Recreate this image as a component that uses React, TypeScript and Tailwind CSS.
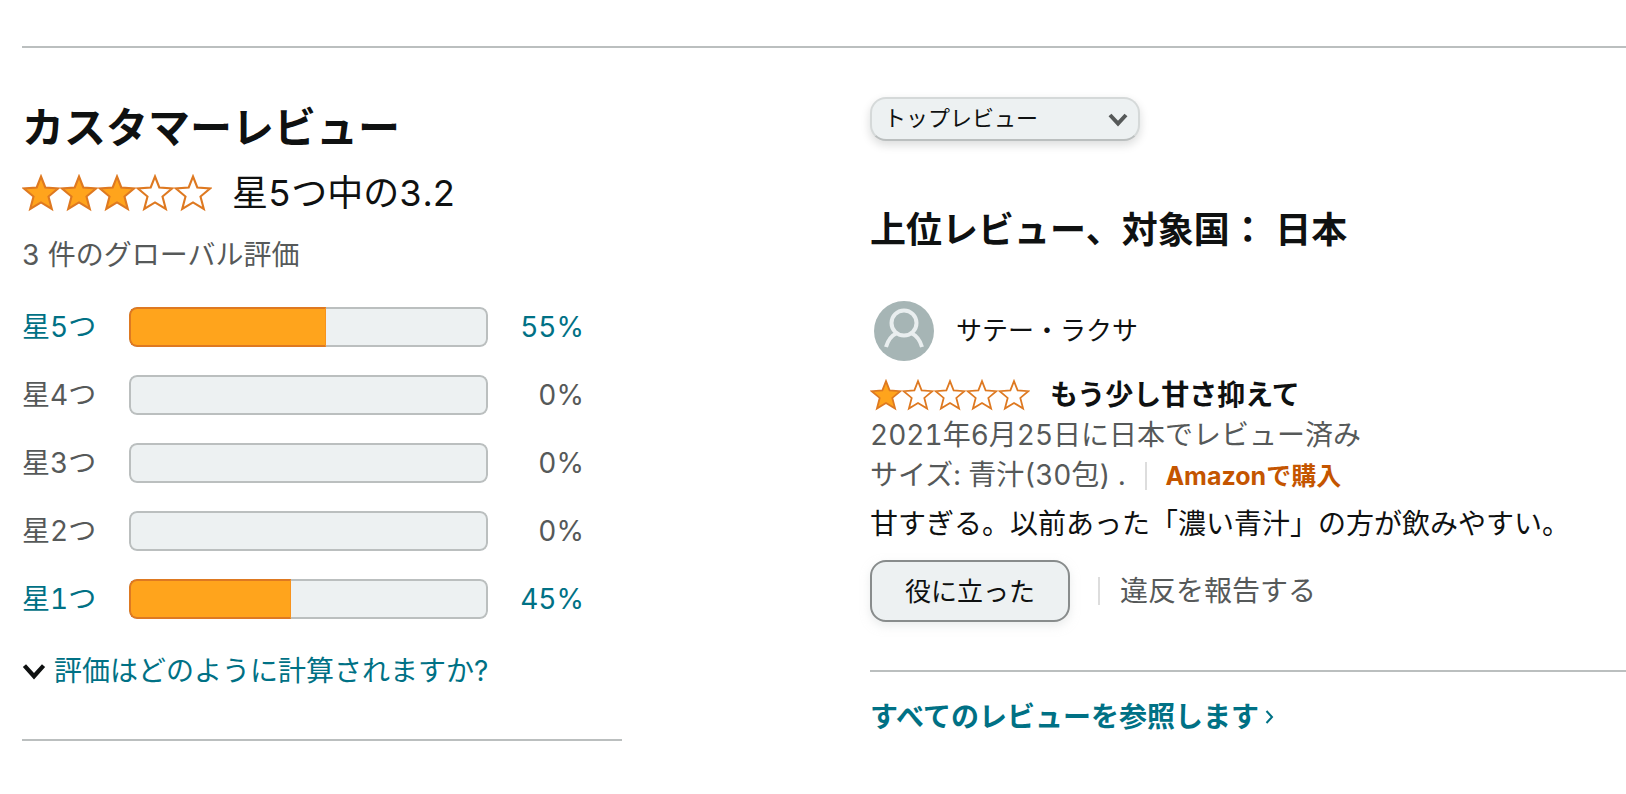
import clsx from 'clsx';

const histogram = [
  { stars: 5, percent: 55 },
  { stars: 4, percent: 0 },
  { stars: 3, percent: 0 },
  { stars: 2, percent: 0 },
  { stars: 1, percent: 45 },
];

function Stars({ value, className }: { value: number; className: string }) {
  return (
    <div className="flex shrink-0" role="img" aria-label={`星5つ中の${value}`}>
      {[1, 2, 3, 4, 5].map(n => (
        <svg key={n} viewBox="0 0 38 38" className={className}>
          <path
            d="M19 2.5 L23.3 13.5 L36 14.5 L26.5 22.5 L29.8 35 L19 28.4 L8.2 35 L11.5 22.5 L2 14.5 L14.7 13.5 Z"
            fill={n <= value ? '#ffa41c' : '#ffffff'}
            stroke="#de7921"
            strokeWidth="2.1"
          />
        </svg>
      ))}
    </div>
  );
}

function Chevron({ className }: { className: string }) {
  return (
    <svg viewBox="0 0 22 16" fill="none" stroke="currentColor" strokeWidth="4" className={className}>
      <path d="M2 2.5 L11 12.5 L20 2.5" />
    </svg>
  );
}

function HistogramRow({ stars, percent }: { stars: number; percent: number }) {
  const active = percent > 0;
  const content = (
    <>
      <span className="w-[107px] shrink-0">星{stars}つ</span>
      <span className="relative h-10 flex-1 overflow-hidden rounded-lg bg-[#edf1f2]">
        <span className="absolute inset-0 rounded-lg border-2 border-[#bbbfbf]" />
        {active && (
          <span
            className="absolute inset-y-0 left-0 rounded-l-lg border-2 border-r border-[#de7921] border-r-[#f7931e] bg-[#ffa41c]"
            style={{ width: `${percent}%` }}
          />
        )}
      </span>
      <span className="w-24 shrink-0 text-right">{percent}%</span>
    </>
  );
  const row = clsx('flex items-center text-[28px] leading-[40px]', active ? 'text-[#007185]' : 'text-[#565959]');

  return <li>{active ? <a href="#" className={row}>{content}</a> : <div className={row}>{content}</div>}</li>;
}

function RatingSummary() {
  return (
    <section className="border-b-2 border-[#bbbfbf] pt-[49px] pb-12">
      <h2 className="text-[42px] leading-[62px] font-bold">カスタマーレビュー</h2>
      <div className="mt-3 flex h-11 items-center gap-5">
        <Stars value={3} className="size-[38px]" />
        <span className="text-4xl">星5つ中の3.2</span>
      </div>
      <p className="mt-5 text-[28px] leading-[40px] text-[#565959]">3 件のグローバル評価</p>
      <ul className="mt-8 flex flex-col gap-7 pr-[38px]">
        {histogram.map(row => (
          <HistogramRow key={row.stars} stars={row.stars} percent={row.percent} />
        ))}
      </ul>
      <a href="#" className="mt-8 flex items-center gap-2 text-[28px] leading-[40px] text-[#007185]">
        <Chevron className="h-[17px] w-6 text-[#0f1111]" />
        評価はどのように計算されますか?
      </a>
    </section>
  );
}

function Review() {
  return (
    <article className="mt-[49px]">
      <div className="flex items-center gap-[22px] pl-1">
        <svg viewBox="0 0 60 60" className="size-[60px]" fill="none">
          <circle cx="30" cy="30" r="30" fill="#a6b5b5" />
          <g stroke="#e9eeef" strokeWidth="4">
            <circle cx="30" cy="22" r="12.5" />
            <path d="M12 46 C14 39 17.5 34.5 23 32 M37 32 C42.5 34.5 46 39 48 46" />
          </g>
        </svg>
        <span className="text-[26px] leading-[40px]">サテー・ラクサ</span>
      </div>
      <div className="mt-[14px] flex items-center gap-5">
        <Stars value={1} className="size-8" />
        <h4 className="text-[28px] leading-[40px] font-bold">もう少し甘さ抑えて</h4>
      </div>
      <p className="text-[28px] leading-[40px] text-[#565959]">2021年6月25日に日本でレビュー済み</p>
      <div className="flex items-baseline text-[28px] leading-[40px] text-[#565959]">
        <span>サイズ: 青汁(30包) .</span>
        <span className="mr-[18px] ml-5 h-7 w-0.5 self-center bg-[#dddddd]" />
        <a href="#" className="text-[25px] leading-[40px] font-bold text-[#c45500]">Amazonで購入</a>
      </div>
      <p className="mt-2 text-[28px] leading-[40px]">甘すぎる。以前あった「濃い青汁」の方が飲みやすい。</p>
      <div className="mt-4 flex items-center">
        <button className="h-[62px] w-[200px] rounded-2xl border-2 border-[#888c8c] bg-[#edf1f2] text-[26px] shadow-[0_4px_10px_rgba(213,217,217,0.5)]">
          役に立った
        </button>
        <span className="mr-5 ml-7 h-7 w-0.5 bg-[#dddddd]" />
        <a href="#" className="text-[28px] leading-[40px] text-[#565959]">違反を報告する</a>
      </div>
    </article>
  );
}

export default function App() {
  return (
    <main className="bg-white pt-[46px] pl-[22px] font-['Inter','Noto_Sans_CJK_JP',sans-serif] text-[#0f1111] tabular-nums">
      <div className="grid grid-cols-[600px_minmax(0,1fr)] items-start gap-[248px] border-t-2 border-[#bbbfbf]">
        <RatingSummary />
        <section className="pt-[49px]">
          <div className="relative w-[270px]">
            <select
              aria-label="並べ替え"
              className="block h-11 w-full appearance-none rounded-2xl border-2 border-[#d5d9d9] border-b-[#bbbfbf] bg-[#edf1f2] pr-10 pb-0.5 pl-3 text-[22px] shadow-[0_4px_10px_rgba(15,17,17,0.15)]"
            >
              <option>トップレビュー</option>
            </select>
            <svg
              viewBox="0 0 20 14"
              className="pointer-events-none absolute top-4 right-3 h-[14px] w-5 text-[#565959]"
              fill="none"
              stroke="currentColor"
              strokeWidth="4"
            >
              <path d="M2 2 L10 10.5 L18 2" />
            </svg>
          </div>
          <h3 className="mt-[67px] text-4xl leading-[44px] font-bold">上位レビュー、対象国： 日本</h3>
          <Review />
          <div className="mt-12 border-t-2 border-[#bbbfbf] pt-[25px]">
            <a href="#" className="inline-flex items-center gap-1.5 text-[28px] leading-[40px] font-bold text-[#007185]">
              すべてのレビューを参照します
              <svg viewBox="0 0 9 14" className="h-[14px] w-[9px]" fill="none" stroke="currentColor" strokeWidth="2">
                <path d="M1.5 1 L7 7 L1.5 13" />
              </svg>
            </a>
          </div>
        </section>
      </div>
    </main>
  );
}
